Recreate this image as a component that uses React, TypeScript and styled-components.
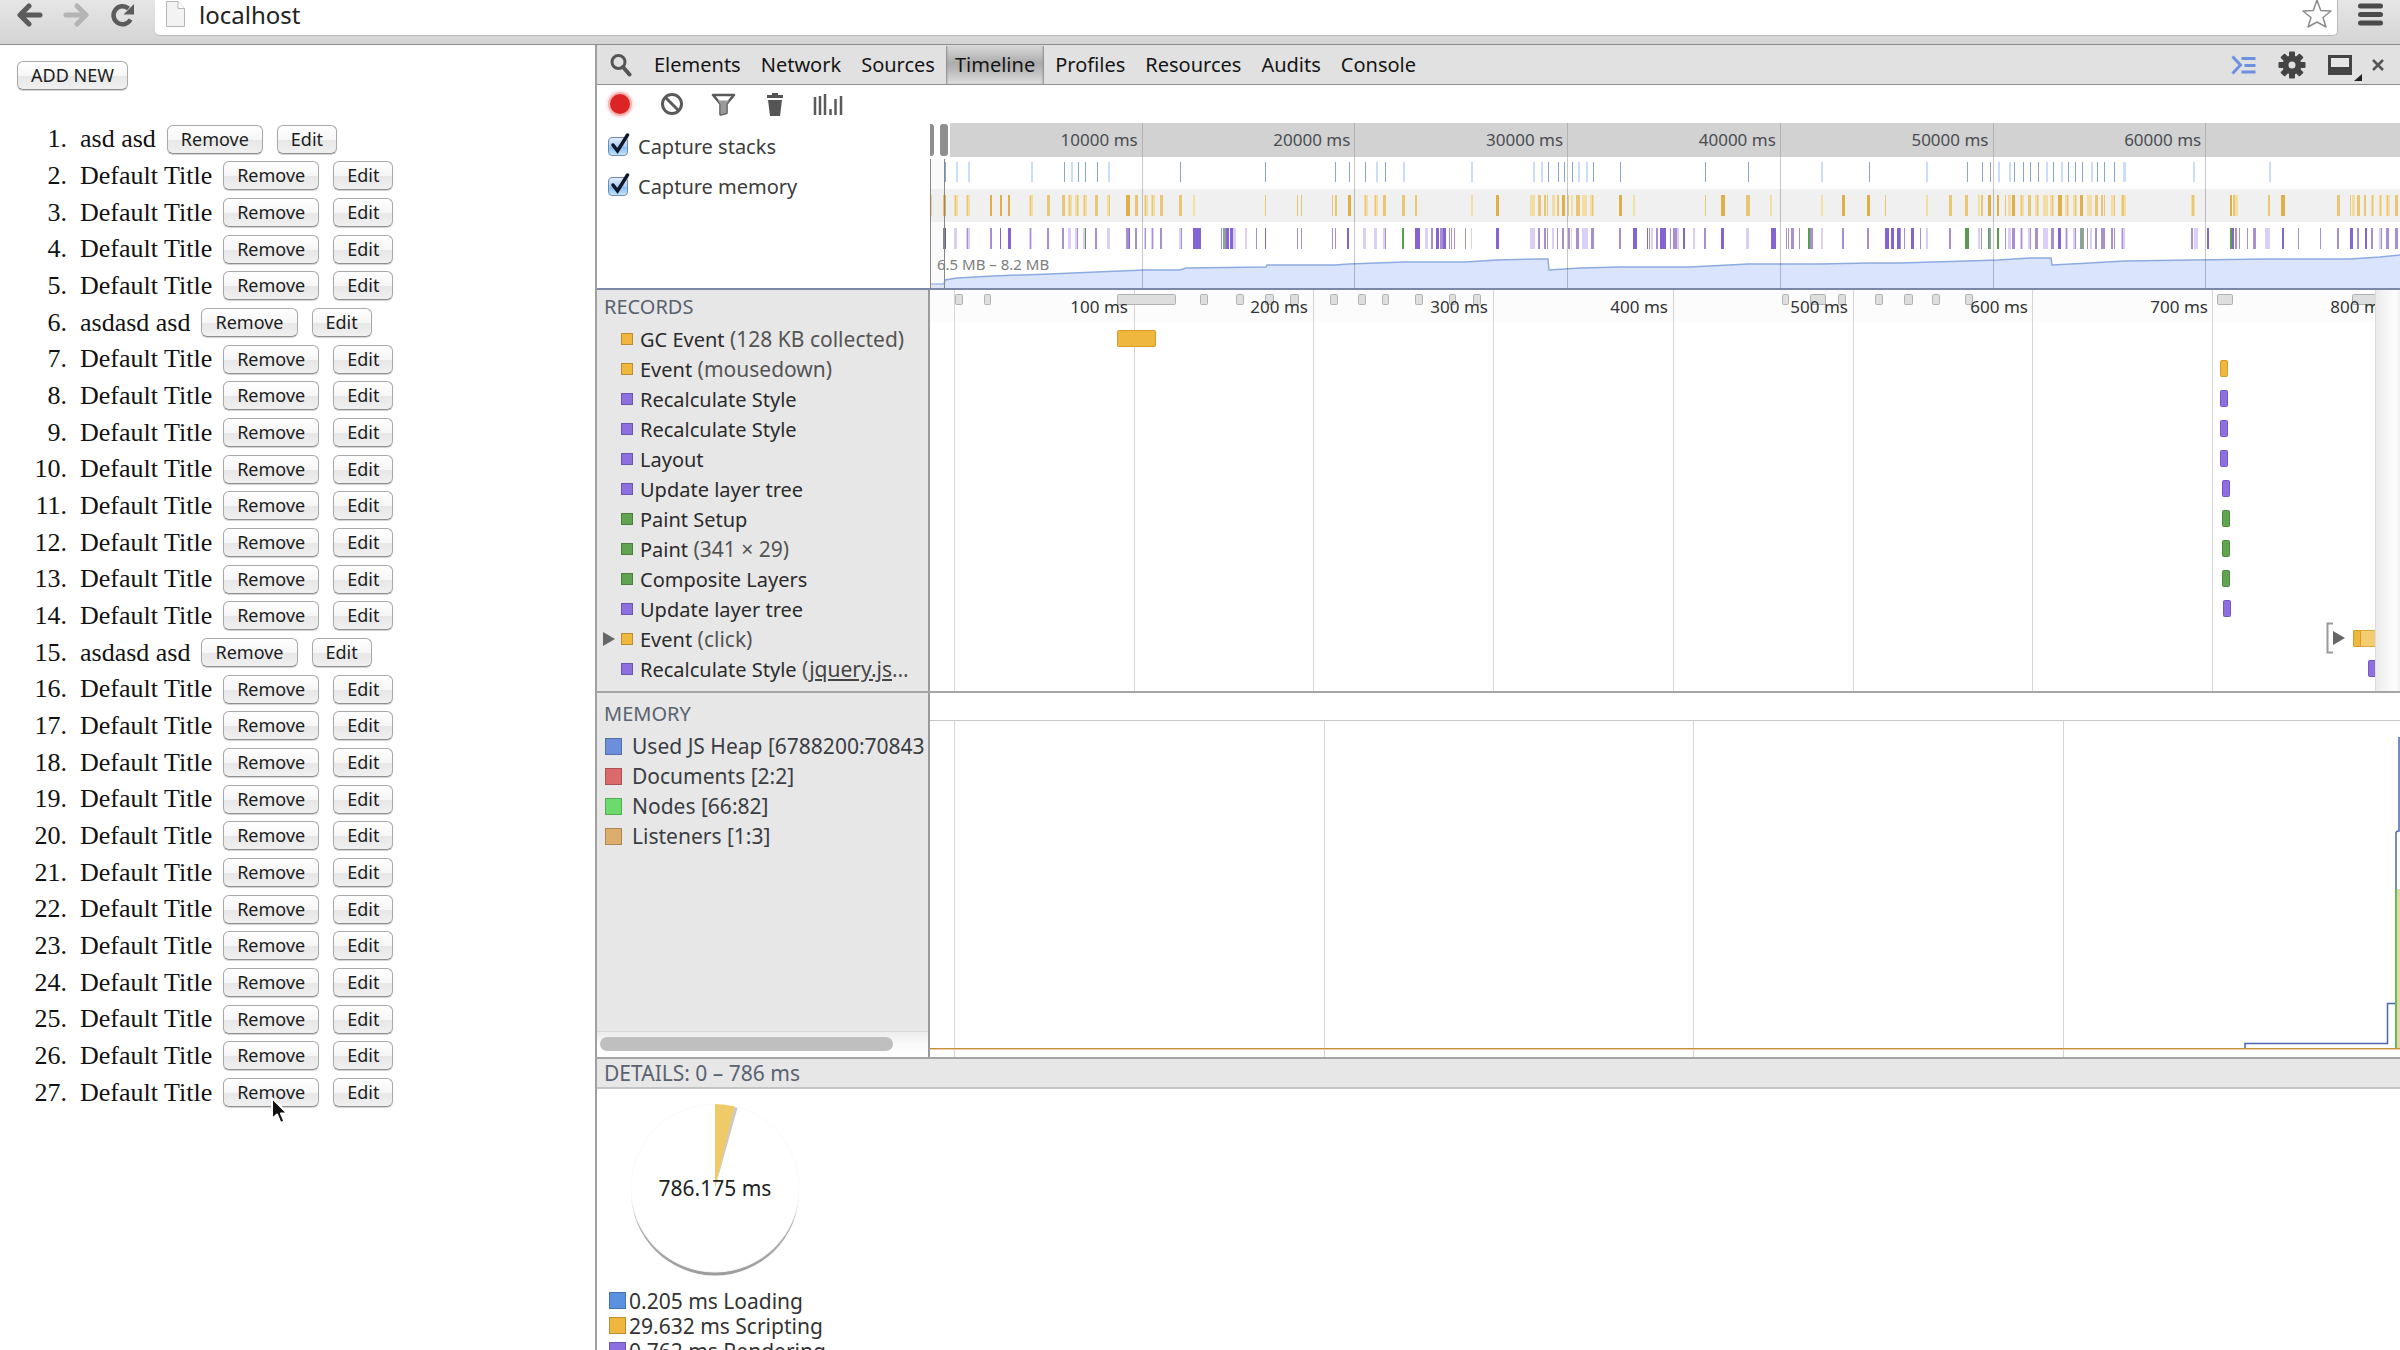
import React from "react";
import styled, { createGlobalStyle, css } from "styled-components";

const UI = `"Noto Sans", "Open Sans", sans-serif`;
const SERIF = `"Liberation Serif", "Times New Roman", serif`;

const Global = createGlobalStyle`
  * { box-sizing: border-box; }
  body { margin: 0; background: #fff; font-family: ${UI}; color: #222; }
  button { font-family: inherit; cursor: default; }
  ul, ol { list-style: none; margin: 0; padding: 0; }
`;

/* ---------- browser chrome ---------- */

const Window = styled.div`
  display: flex;
  flex-direction: column;
  height: 100vh;
  overflow: hidden;
`;

const TopBar = styled.header`
  display: flex;
  gap: 20px;
  height: 45px;
  flex: none;
  padding: 0 17px;
  background: linear-gradient(#e6e6e6, #d4d4d4);
  border-bottom: 1px solid #8c8c8c;
`;

const BarButton = styled.button`
  display: flex;
  align-items: center;
  height: 30px;
  padding: 0;
  border: 0;
  background: none;
`;

const Omnibox = styled.div`
  display: flex;
  flex: 1;
  height: 36px;
  padding: 0 5px 6px 11px;
  background: #fff;
  border: 1px solid #b9b9b9;
  border-width: 0 1px 1px 0;
  border-radius: 0 0 5px 5px;
`;

const Address = styled.input`
  flex: 1;
  min-width: 0;
  margin-left: 14px;
  padding: 0;
  border: 0;
  outline: 0;
  background: none;
  font: 24px/30px ${UI};
  color: #222;
`;

const Columns = styled.div`
  display: flex;
  flex: 1;
  min-height: 0;
`;

/* ---------- page under inspection ---------- */

const Page = styled.main`
  flex: 0 0 595px;
  padding: 16px 17px;
  overflow: hidden;
`;

const AquaButton = styled.button`
  height: 29px;
  padding: 0 13px;
  border: 1px solid #a9a9a9;
  border-bottom-color: #8f8f8f;
  border-radius: 6px;
  background: linear-gradient(#fff 0%, #f6f6f6 50%, #e7e7e7 52%, #f0f0f0 100%);
  box-shadow: 0 1px 1px rgba(0, 0, 0, 0.18);
  font-size: 18px;
  line-height: 27px;
  color: #1c1c1c;
`;

const TodoList = styled.ol`
  display: grid;
  grid-auto-rows: 1fr;
  min-height: 990px;
  margin-top: 31px;
`;

const TodoItem = styled.li`
  display: flex;
  align-items: center;
`;

const Marker = styled.span`
  width: 50px;
  margin-right: 13px;
  text-align: right;
  font: 26px/34px ${SERIF};
  color: #111;
`;

const TodoTitle = styled.span`
  margin-right: 11px;
  font: 26px/34px ${SERIF};
  color: #111;
`;

const Actions = styled.span`
  position: relative;
  display: flex;
  gap: 14px;
`;

const Cursor = styled.svg`
  position: absolute;
  left: 47px;
  top: 18px;
`;

/* ---------- devtools ---------- */

const DevTools = styled.section`
  display: flex;
  flex-direction: column;
  flex: 1;
  min-width: 0;
  border-left: 2px solid #a0a0a0;
`;

const ToolBar = styled.nav`
  display: flex;
  align-items: center;
  height: 40px;
  flex: none;
  padding: 0 16px 0 13px;
  background: #e1e1e1;
  border-bottom: 1px solid #8f8f8f;
`;

const IconButton = styled.button`
  display: flex;
  align-items: center;
  justify-content: center;
  padding: 0;
  border: 0;
  background: none;
`;

const Tabs = styled.div`
  display: flex;
  flex: 1;
  gap: 2px;
  margin-left: 13px;
`;

const Tab = styled.button<{ $active?: boolean }>`
  height: 38px;
  padding: 0 9px;
  border: 0;
  background: none;
  font-size: 20px;
  line-height: 38px;
  color: #151515;
  ${(p) =>
    p.$active &&
    css`
      background: linear-gradient(#d8d8d8, #acacac 45%, #b6b6b6 60%, #dedede);
      box-shadow: inset 2px 0 2px -1px #8a8a8a, inset -2px 0 2px -1px #8a8a8a;
    `}
`;

const WindowTools = styled.div`
  display: flex;
  align-items: center;
  gap: 22px;
`;

const DockTools = styled.div`
  display: flex;
  align-items: center;
  gap: 10px;
`;

const ActionBar = styled.div`
  display: flex;
  align-items: center;
  gap: 22px;
  height: 38px;
  flex: none;
  padding-left: 8px;
`;

const Split = styled.div<{ $line: string }>`
  display: flex;
  flex: none;
  border-bottom: 2px solid ${(p) => p.$line};
`;

const Side = styled.div`
  display: flex;
  flex-direction: column;
  flex: 0 0 333px;
  overflow: hidden;
  background: #e7e7e7;
  border-right: 2px solid #9a9a9a;
`;

const CaptureSide = styled.div`
  flex: 0 0 333px;
  padding: 3px 0 0 11px;
`;

const CheckRow = styled.label`
  display: flex;
  align-items: center;
  height: 40px;
  gap: 10px;
  font-size: 20px;
  color: #3c3c3c;
`;

const CheckWrap = styled.span`
  position: relative;
  display: flex;
`;

const Check = styled.input`
  appearance: none;
  width: 20px;
  height: 19px;
  margin: 0;
  border: 1px solid #6f8cab;
  border-radius: 4px;
  background: linear-gradient(#e3effb, #a9cdf2 50%, #8bbdf0 55%, #c2e4ff);
`;

const CheckMark = styled.svg`
  position: absolute;
  left: 2px;
  top: -4px;
  pointer-events: none;
`;

const Plot = styled.div`
  position: relative;
  display: flex;
  flex-direction: column;
  flex: 1;
  min-width: 0;
`;

const OverviewRuler = styled.div`
  display: flex;
  height: 34px;
  background: #d2d2d2;
`;

const OverviewTick = styled.span`
  flex: 0 0 14.47%;
  padding-right: 4px;
  border-right: 1px solid #b2b2b2;
  text-align: right;
  font-size: 17px;
  line-height: 34px;
  color: #4a4d52;
`;

const Handles = styled.div`
  position: absolute;
  left: 0;
  top: 0;
  display: flex;
  justify-content: space-between;
  width: 20px;
  height: 34px;
  padding: 1px 2px 1px 0;
  background: #fff;
`;

const Handle = styled.i<{ $w: number }>`
  width: ${(p) => p.$w}px;
  border-radius: ${(p) => (p.$w > 5 ? "3px" : "0 3px 3px 0")};
  background: #8f8f8f;
`;

const Chart = styled.svg`
  display: block;
  width: 100%;
`;

const Backdrop = styled.svg`
  position: absolute;
  inset: 0;
  width: 100%;
  height: 100%;
`;

const MemoryRange = styled.span`
  position: absolute;
  left: 7px;
  bottom: 14px;
  font-size: 15px;
  line-height: 20px;
  color: #7d7d7d;
`;

const RecordTicks = styled.div`
  position: relative;
  display: flex;
  padding-left: 24px;
  height: 35px;
  overflow: hidden;
`;

const RecordTick = styled.span`
  flex: 0 0 180px;
  padding-right: 6px;
  text-align: right;
  white-space: nowrap;
  font-size: 17px;
  line-height: 33px;
  color: #333;
`;

const Gutter = styled.div`
  flex: 0 0 25px;
  border-left: 1px solid #dcdcdc;
  background: linear-gradient(to right, #ebebeb, #f5f5f5 40%, #fdfdfd 80%, #f0f0f0);
`;

const PaneTitle = styled.h2`
  margin: 0;
  padding-left: 7px;
  font-size: 20px;
  font-weight: 400;
  line-height: 34px;
  color: #596270;
`;

const RecordList = styled.ul`
  padding-bottom: 7px;
`;

const RecordRow = styled.li`
  display: flex;
  align-items: center;
  height: 30px;
  font-size: 20px;
  color: #2b2b2b;
  white-space: pre;
`;

const Disclosure = styled.span`
  display: flex;
  width: 24px;
  padding-left: 6px;
`;

const Swatch = styled.i<{ $fill: string; $size: number; $gap: number }>`
  width: ${(p) => p.$size}px;
  height: ${(p) => p.$size}px;
  margin-right: ${(p) => p.$gap}px;
  flex: none;
  background: ${(p) => p.$fill};
  border: 1px solid rgba(0, 0, 0, 0.22);
`;

const Param = styled.span`
  font-size: 21px;
  color: #555;
`;

const FileLink = styled.a`
  color: #444;
`;

const MemorySide = styled(Side)`
  padding-top: 4px;
`;

const Counters = styled.ul`
  flex: 1;
`;

const Counter = styled.li`
  display: flex;
  align-items: center;
  height: 30px;
  padding-left: 8px;
  font-size: 21px;
  color: #3a3d42;
  white-space: nowrap;
`;

const ScrollTrack = styled.div`
  height: 26px;
  padding: 5px 3px;
  border-top: 1px solid #d8d8d8;
  background: linear-gradient(#ececec, #fbfbfb 50%, #fff);
`;

const ScrollThumb = styled.div`
  width: 90%;
  height: 14px;
  border-radius: 7px;
  background: #bfbfbf;
`;

const MemoryPlot = styled(Plot)`
  height: 364px;
`;

const DetailsTitle = styled(PaneTitle)`
  flex: none;
  height: 30px;
  font-size: 21px;
  line-height: 28px;
  background: #e7e7e7;
  border-bottom: 2px solid #c4c4c4;
`;

const Details = styled.div`
  padding: 15px 12px;
`;

const PieBox = styled.div`
  position: relative;
  width: 168px;
  height: 172px;
  margin: 0 0 12px 22px;
`;

const PieTotal = styled.span`
  position: absolute;
  inset: 0;
  text-align: center;
  font-size: 21px;
  line-height: 168px;
  color: #222;
`;

const LegendRow = styled.li`
  display: flex;
  align-items: center;
  height: 25px;
  font-size: 21px;
  color: #333;
`;

/* ---------- data ---------- */

const titles: string[] = Array.from({ length: 27 }, (_, i) =>
  i === 0 ? "asd asd" : i === 5 || i === 14 ? "asdasd asd" : "Default Title"
);

const YELLOW = "#efb73e";
const PURPLE = "#8d6fe0";
const GREEN = "#60a350";

type Rec = { name: string; param?: string; link?: string; color: string; open?: boolean };
const records: Rec[] = [
  { name: "GC Event", param: "(128 KB collected)", color: YELLOW },
  { name: "Event", param: "(mousedown)", color: YELLOW },
  { name: "Recalculate Style", color: PURPLE },
  { name: "Recalculate Style", color: PURPLE },
  { name: "Layout", color: PURPLE },
  { name: "Update layer tree", color: PURPLE },
  { name: "Paint Setup", color: GREEN },
  { name: "Paint", param: "(341 × 29)", color: GREEN },
  { name: "Composite Layers", color: GREEN },
  { name: "Update layer tree", color: PURPLE },
  { name: "Event", param: "(click)", color: YELLOW, open: true },
  { name: "Recalculate Style", link: "jquery.js", color: PURPLE },
];

const counters = [
  { label: "Used JS Heap [6788200:70843", color: "#6b8fdb" },
  { label: "Documents [2:2]", color: "#db6b6b" },
  { label: "Nodes [66:82]", color: "#6bdb6b" },
  { label: "Listeners [1:3]", color: "#dbae6b" },
];

const legend = [
  { label: "0.205 ms Loading", color: "#5a92e0" },
  { label: "29.632 ms Scripting", color: "#efb73e" },
  { label: "0.762 ms Rendering", color: "#8d6fe0" },
];

const tones: Record<string, string> = {
  B: "#8ba6cd",
  b: "#c9defa",
  Y: "#dfaf48",
  y: "#e9c673",
  v: "#f2dda4",
  P: "#8463d2",
  m: "#a78fd0",
  l: "#dccff6",
  G: "#5b9a51",
  g: "#8ba398",
  k: "#596275",
};

/* Each mark is "x tone width". */
const loading =
  "15B1 26b2 38b2 101b2 134B1 141b2 148B1 155B1 167B1 178b2 250B1 335B1 405B1 419B1 435B1 446b2 455B1 473b2 541b2 603b2 611b2 618B1 628B1 634B1 642B1 648b2 656b2 663B1 690B1 775B1 818B1 891b2 939B1 996b2 1037B1 1052B1 1060B1 1068b2 1079b2 1084B1 1093B1 1100B1 1108B1 1116b2 1123B1 1131b2 1138B1 1145B1 1152B1 1161b2 1167B1 1174B1 1184B1 1193b3 1263b2 1339b2";
const scripting =
  "0y2 13Y3 24v4 25y1 36v4 37y1 60Y2 70Y2 78Y2 99v4 100y1 117y3 132y3 138v4 139y1 145v4 147y1 153v4 154y1 165y3 177v3 179y1 196Y4 205y3 214v4 215y1 221v4 222y1 230y3 249y3 263v2 335y1 367y1 371y1 402y1 405y2 418Y3 434v4 435y1 444v4 445y1 453y3 472y3 485y2 541v2 566Y3 600v5 608y3 614y2 617y1 622v3 627y2 632Y3 638y1 641v2 646y4 652v5 660v4 662y1 689Y3 703v2 775y1 791Y4 816y4 840v2 891v2 912Y3 937Y3 955y1 996v2 1019y3 1035y3 1048v2 1051y2 1058Y3 1067Y2 1075y1 1078v3 1082Y3 1090v4 1091y1 1098y3 1105v4 1107y1 1113v5 1120v4 1122y1 1128Y4 1135v4 1137y1 1143v4 1145y1 1150Y3 1157v3 1160v2 1165y3 1171y2 1174y1 1181v3 1184y1 1191v5 1192y2 1261v4 1262y2 1300Y2 1303y2 1305v3 1338y2 1351Y4 1407y3 1420y1 1422v3 1427y3 1434y2 1441v3 1442y1 1449v3 1450y1 1456v4 1457y1 1465y3";
const rendering =
  "13k3 24l3 36l4 37m1 60m2 70P1 78P3 99l3 100m1 117m2 132m2 138l3 145l3 147m1 153l3 155G1 165m2 177l3 196m3 199P1 205m2 214l2 215m1 221l3 222m1 230m2 249l3 251m1 263P8 291m1 293g3 296P3 300P4 303l3 315l2 326m1 335P1 367m1 371m1 402m1 405m1 417P2 433l3 444l3 453l3 455m1 472G2 485P5 495l3 501m2 506P3 510m4 513P3 519m1 521m1 524m1 535m1 541l1 566P3 600l5 608m2 614m2 617m1 622l2 627m1 632m2 638m2 641l1 646m3 652l6 661m3 689m2 703P4 717P1 719m1 721l2 726m2 730P3 732P4 740m1 743m4 747l2 753P2 763l2 774m2 791P3 816l3 841P5 856m1 858m1 861m3 869m1 878G2 880m3 891l2 912m2 937m2 955P4 961P3 967P4 974m1 970m1 981P3 990m1 996l2 1019m2 1035G4 1048l2 1051m1 1058G1 1059g2 1067G2 1075m1 1078l3 1082m3 1090l3 1091m1 1098l3 1100m1 1105m3 1113l5 1121m3 1128P3 1135l3 1136m1 1143l2 1145m1 1150g4 1157m1 1160l2 1165m2 1171m4 1181m2 1184m1 1191l4 1192m1 1261m2 1264l4 1277P2 1300G2 1302P2 1305m2 1309m1 1317m1 1323m3 1335l5 1352P2 1368m1 1390m1 1407m2 1420P3 1427m2 1435P2 1441m2 1449l3 1451m1 1456m3 1465m3";

const parseMarks = (src: string) =>
  src.split(" ").map((s) => {
    const m = s.match(/^(\d+)([A-Za-z])(\d+)$/)!;
    return { x: +m[1], tone: tones[m[2]], w: +m[3] };
  });

const heapCurve =
  "0,127 14,127 15,123 27,121 63,119 120,117 166,115 215,113 250,113 256,111 336,110 337,108 405,108 419,107 446,106 474,105 535,105 567,103 610,102 618,102 619,113 650,111 691,110 760,110 818,107 890,107 940,106 970,106 1037,104 1068,103 1100,101 1121,101 1122,108 1160,106 1195,104 1263,103 1339,102 1420,102 1450,100 1470,98";

const frames: [number, number][] = [
  [25, 8], [54, 7], [187, 59], [270, 8], [306, 8], [335, 9], [360, 9], [400, 8], [428, 8], [452, 7],
  [485, 8], [519, 7], [543, 8], [852, 7], [880, 16], [908, 8], [945, 8], [974, 9], [1002, 8], [1035, 8],
  [1287, 16], [1422, 24],
];

const spans: [number, number, number, string][] = [
  [0, 187, 39, YELLOW],
  [1, 1290, 8, YELLOW],
  [2, 1290, 8, PURPLE],
  [3, 1290, 8, PURPLE],
  [4, 1290, 8, PURPLE],
  [5, 1292, 8, PURPLE],
  [6, 1292, 8, GREEN],
  [7, 1292, 8, GREEN],
  [8, 1292, 8, GREEN],
  [9, 1293, 8, PURPLE],
  [10, 1423, 24, "#f3cd70"],
  [10, 1423, 8, YELLOW],
  [11, 1438, 10, PURPLE],
];
const strokes: Record<string, string> = { [YELLOW]: "#d79b25", [PURPLE]: "#7558c4", [GREEN]: "#4b8b3d" };

/* ---------- drawings ---------- */

const Arrow = ({ color, flip }: { color: string; flip?: boolean }) => (
  <svg width="26" height="24" viewBox="0 0 26 24" fill="none" stroke={color} strokeWidth="5" strokeLinecap="round" strokeLinejoin="round">
    <path d={flip ? "M3 12H22M14 3L23 12L14 21" : "M23 12H4M12 3L3 12L12 21"} />
  </svg>
);

const Marks = ({ src, y, h }: { src: string; y: number; h: number }) => (
  <g>
    {parseMarks(src).map((m, i) => (
      <rect key={i} x={m.x} y={y} width={m.w} height={h} fill={m.tone} />
    ))}
  </g>
);

const gearTeeth = [0, 45, 90, 135, 180, 225, 270, 315];

export default function App() {
  return (
    <Window>
      <Global />
      <TopBar>
        <BarButton aria-label="Back"><Arrow color="#5b5b5b" /></BarButton>
        <BarButton aria-label="Forward"><Arrow color="#b4b4b4" flip /></BarButton>
        <BarButton aria-label="Reload">
          <svg width="26" height="24" viewBox="0 0 26 24">
            <path d="M21.500 16.500A9 9 0 1 1 19.500 5.500" fill="none" stroke="#5b5b5b" strokeWidth="4.500" />
            <path d="M25 1V11.500H14.500Z" fill="#5b5b5b" />
          </svg>
        </BarButton>
        <Omnibox>
          <svg width="19" height="28" viewBox="0 0 19 28">
            <path d="M.5 1.500H12L18.500 8.500V26.500H.5Z" fill="#f3f3f3" stroke="#b5b5b5" />
            <path d="M12 1.500V8.500H18.500" fill="#fff" stroke="#b5b5b5" />
          </svg>
          <Address aria-label="Address" defaultValue="localhost" />
          <BarButton aria-label="Bookmark">
            <svg width="30" height="30" viewBox="0 0 30 30">
              <path d="M15 0L18.700 10.500L29 11L21 17.500L24 27L15 22L6 27L9 17.500L1 11L11.300 10.500Z" fill="#fff" stroke="#8d8d8d" strokeWidth="1.500" strokeLinejoin="round" />
            </svg>
          </BarButton>
        </Omnibox>
        <BarButton aria-label="Menu">
          <svg width="25" height="24" viewBox="0 0 25 24" stroke="#4b4b4b" strokeWidth="5" strokeLinecap="round">
            <path d="M2.500 3H22.500M2.500 11.500H22.500M2.500 20H22.500" />
          </svg>
        </BarButton>
      </TopBar>

      <Columns>
        <Page>
          <AquaButton>ADD NEW</AquaButton>
          <TodoList>
            {titles.map((title, i) => (
              <TodoItem key={i}>
                <Marker>{i + 1}.</Marker>
                <TodoTitle>{title}</TodoTitle>
                <Actions>
                  <AquaButton>Remove</AquaButton>
                  <AquaButton>Edit</AquaButton>
                  {i === titles.length - 1 && (
                    <Cursor width="22" height="32" viewBox="0 0 22 32">
                      <path d="M2 2V23L7 18.500L10.500 27L14.500 25.500L11 17.500H17.500Z" fill="#111" stroke="#fff" strokeWidth="2" strokeLinejoin="round" />
                    </Cursor>
                  )}
                </Actions>
              </TodoItem>
            ))}
          </TodoList>
        </Page>

        <DevTools>
          <ToolBar>
            <IconButton aria-label="Inspect">
              <svg width="22" height="24" viewBox="0 0 22 24" fill="none" stroke="#555">
                <circle cx="8.500" cy="9" r="6.500" strokeWidth="3" />
                <path d="M13 14L19.500 21.500" strokeWidth="4" strokeLinecap="round" />
              </svg>
            </IconButton>
            <Tabs>
              {["Elements", "Network", "Sources", "Timeline", "Profiles", "Resources", "Audits", "Console"].map((t) => (
                <Tab key={t} $active={t === "Timeline"}>{t}</Tab>
              ))}
            </Tabs>
            <WindowTools>
              <IconButton aria-label="Show console">
                <svg width="25" height="20" viewBox="0 0 25 20" fill="none" stroke="#6c90e2" strokeWidth="3">
                  <path d="M1.500 1.500L9.500 10L1.500 18.500" />
                  <path d="M10.500 3.500H24.500M13.500 10.500H24.500M10.500 17H24.500" />
                </svg>
              </IconButton>
              <IconButton aria-label="Settings">
                <svg width="28" height="28" viewBox="-14 -14 28 28">
                  {gearTeeth.map((a) => (
                    <rect key={a} x="-3" y="-13.500" width="6" height="8" rx="1" fill="#444" transform={`rotate(${a})`} />
                  ))}
                  <circle r="6.500" fill="none" stroke="#444" strokeWidth="6" />
                </svg>
              </IconButton>
              <DockTools>
                <IconButton aria-label="Dock side">
                  <svg width="34" height="34" viewBox="0 0 34 34">
                    <path d="M0 7H24V27H0Z" fill="#444" />
                    <path d="M3 10H21V19H3Z" fill="#e6e6e6" />
                    <path d="M34 26V33H26Z" fill="#222" />
                  </svg>
                </IconButton>
                <IconButton aria-label="Close">
                  <svg width="12" height="12" viewBox="0 0 12 12" stroke="#555" strokeWidth="2.500">
                    <path d="M1 1L11 11M11 1L1 11" />
                  </svg>
                </IconButton>
              </DockTools>
            </WindowTools>
          </ToolBar>

          <ActionBar>
            <IconButton aria-label="Record">
              <svg width="30" height="30" viewBox="0 0 30 30">
                <circle cx="15" cy="15" r="14" fill="#fceaea" />
                <circle cx="15" cy="15" r="12" fill="#f3b4b4" />
                <circle cx="15" cy="15" r="10" fill="#dc2424" />
              </svg>
            </IconButton>
            <IconButton aria-label="Clear">
              <svg width="30" height="24" viewBox="0 0 30 24" fill="none" stroke="#5a5a5a" strokeWidth="3">
                <circle cx="15" cy="12" r="9.500" />
                <path d="M8.500 5.500L21.500 18.500" />
              </svg>
            </IconButton>
            <IconButton aria-label="Filter">
              <svg width="30" height="24" viewBox="0 0 30 24">
                <path d="M4 3H25L17.500 12V21L11.500 22.500V12Z" fill="#fff" stroke="#5a5a5a" strokeWidth="2.500" strokeLinejoin="round" />
                <path d="M8.500 8.500H20.500L17.500 12V21L11.500 22.500V12Z" fill="#9a9a9a" />
              </svg>
            </IconButton>
            <IconButton aria-label="Collect garbage">
              <svg width="30" height="24" viewBox="0 0 30 24" fill="#555">
                <path d="M6 3H11V1H17V3H22V6H6ZM7 8H21L19 24H9Z" />
              </svg>
            </IconButton>
            <IconButton aria-label="Flame chart">
              <svg width="30" height="24" viewBox="0 0 30 24" stroke="#5a5a5a" strokeWidth="2.500">
                <path d="M2 5V23M7 4V23M12 2V23M17.500 17V23M22.500 7V23M28 4V23" />
              </svg>
            </IconButton>
          </ActionBar>

          <Split $line="#7c89a6">
            <CaptureSide>
              {["Capture stacks", "Capture memory"].map((label) => (
                <CheckRow key={label}>
                  <CheckWrap>
                    <Check type="checkbox" defaultChecked />
                    <CheckMark width="20" height="22" viewBox="0 0 20 22">
                      <path d="M3 12L7.500 18L17.500 2" fill="none" stroke="#10192c" strokeWidth="3.500" strokeLinecap="round" />
                    </CheckMark>
                  </CheckWrap>
                  {label}
                </CheckRow>
              ))}
            </CaptureSide>
            <Plot>
              <OverviewRuler>
                {[10000, 20000, 30000, 40000, 50000, 60000].map((t) => (
                  <OverviewTick key={t}>{t} ms</OverviewTick>
                ))}
              </OverviewRuler>
              <Handles>
                <Handle $w={4} />
                <Handle $w={8} />
              </Handles>
              <Chart viewBox="0 0 1470 131" height="131" preserveAspectRatio="none">
                <rect x="0" y="32" width="1470" height="33" fill="#f0f0f0" />
                <Marks src={loading} y={5} h={20} />
                <Marks src={scripting} y={38} h={21} />
                <Marks src={rendering} y={71} h={21} />
                <polygon points={`0,131 ${heapCurve} 1470,131`} fill="#dae4fd" />
                <polyline points={heapCurve} fill="none" stroke="#8eabdf" strokeWidth="1.500" />
                {[1, 2, 3, 4, 5, 6].map((k) => (
                  <rect key={k} x={Math.round(k * 212.7) - 1} y="0" width="1" height="131" fill="rgba(0,0,0,0.22)" />
                ))}
                <rect x="0" y="2" width="14" height="129" fill="rgba(235,235,235,0.25)" />
                <rect x="14" y="2" width="1" height="129" fill="#888" />
                <rect x="0" y="2" width="1" height="129" fill="#888" />
              </Chart>
              <MemoryRange>6.5 MB – 8.2 MB</MemoryRange>
            </Plot>
          </Split>

          <Split $line="#a5a5a5">
            <Side>
              <PaneTitle>RECORDS</PaneTitle>
              <RecordList>
                {records.map((r, i) => (
                  <RecordRow key={i}>
                    <Disclosure>
                      {r.open && (
                        <svg width="12" height="14" viewBox="0 0 12 14"><path d="M0 0L12 7L0 14Z" fill="#666" /></svg>
                      )}
                    </Disclosure>
                    <Swatch $fill={r.color} $size={12} $gap={7} />
                    {r.name}
                    {r.param && <Param> {r.param}</Param>}
                    {r.link && <Param> (<FileLink href="#">{r.link}</FileLink>…</Param>}
                  </RecordRow>
                ))}
              </RecordList>
            </Side>
            <Plot>
              <Backdrop viewBox="0 0 1445 401" preserveAspectRatio="none">
                <rect x="0" y="0" width="1445" height="32" fill="#fcfcfc" />
                {[0, 1, 2, 3, 4, 5, 6, 7].map((k) => (
                  <rect key={k} x={Math.round(24 + k * 179.7)} y="0" width="1" height="401" fill="#d6d6d6" />
                ))}
                {frames.map(([x, w], i) => (
                  <rect key={i} x={x + 0.5} y="4.500" width={w - 1} height="10" rx="1" fill="#dedede" stroke="#b2b2b2" />
                ))}
                {spans.map(([row, x, w, c], i) => (
                  <rect key={i} x={x + 0.5} y={row * 30 + 40.5} width={w - 1} height="16" rx="1" fill={c} stroke={strokes[c] ?? "#dfa83c"} />
                ))}
                <path d="M1403 333.500H1397.500V362.500H1403" fill="none" stroke="#9a9a9a" strokeWidth="2" />
                <path d="M1403 341L1415 348L1403 355Z" fill="#666" />
              </Backdrop>
              <RecordTicks>
                {[100, 200, 300, 400, 500, 600, 700, 800].map((t) => (
                  <RecordTick key={t}>{t} ms</RecordTick>
                ))}
              </RecordTicks>
            </Plot>
            <Gutter />
          </Split>

          <Split $line="#a5a5a5">
            <MemorySide>
              <PaneTitle>MEMORY</PaneTitle>
              <Counters>
                {counters.map((c) => (
                  <Counter key={c.label}>
                    <Swatch $fill={c.color} $size={17} $gap={10} />
                    {c.label}
                  </Counter>
                ))}
              </Counters>
              <ScrollTrack><ScrollThumb /></ScrollTrack>
            </MemorySide>
            <MemoryPlot>
              <Backdrop viewBox="0 0 1470 364" preserveAspectRatio="none">
                <rect x="0" y="27" width="1470" height="1" fill="#c6c6c6" />
                {[0, 1, 2, 3].map((k) => (
                  <rect key={k} x={Math.round(24 + k * 369.7)} y="28" width="1" height="336" fill="#d6d6d6" />
                ))}
                <path d="M1315 356V350.500H1457.500V310.500H1466V140Q1466 138 1469 138V44" fill="none" stroke="#4a67ad" strokeWidth="1.500" />
                <rect x="1467" y="196" width="3" height="159" fill="#ecd3a8" />
                <rect x="1465" y="196" width="2" height="160" fill="#55c455" />
                <rect x="0" y="355" width="1470" height="1" fill="#c98f3c" />
                <rect x="0" y="356" width="1470" height="1" fill="#e8cfa5" />
              </Backdrop>
            </MemoryPlot>
          </Split>

          <DetailsTitle>DETAILS: 0 – 786 ms</DetailsTitle>
          <Details>
            <PieBox>
              <svg width="168" height="172" viewBox="0 0 168 172">
                <defs>
                  <linearGradient id="rim" x1="0" y1="0" x2="0" y2="1">
                    <stop offset="0" stopColor="#fafafa" />
                    <stop offset="0.5" stopColor="#ececec" />
                    <stop offset="0.7" stopColor="#b4b4b4" />
                    <stop offset="1" stopColor="#9c9c9c" />
                  </linearGradient>
                </defs>
                <circle cx="84" cy="87.500" r="84" fill="url(#rim)" />
                <circle cx="84" cy="84" r="84" fill="#fff" stroke="#fafafa" />
                <path d="M84 84L106.500 4L103 3Z" fill="#c9c9c9" />
                <path d="M84 84V0A84 84 0 0 1 103.700 2.500Z" fill="#eecb68" />
              </svg>
              <PieTotal>786.175 ms</PieTotal>
            </PieBox>
            <ul>
              {legend.map((l) => (
                <LegendRow key={l.label}>
                  <Swatch $fill={l.color} $size={17} $gap={3} />
                  {l.label}
                </LegendRow>
              ))}
            </ul>
          </Details>
        </DevTools>
      </Columns>
    </Window>
  );
}
